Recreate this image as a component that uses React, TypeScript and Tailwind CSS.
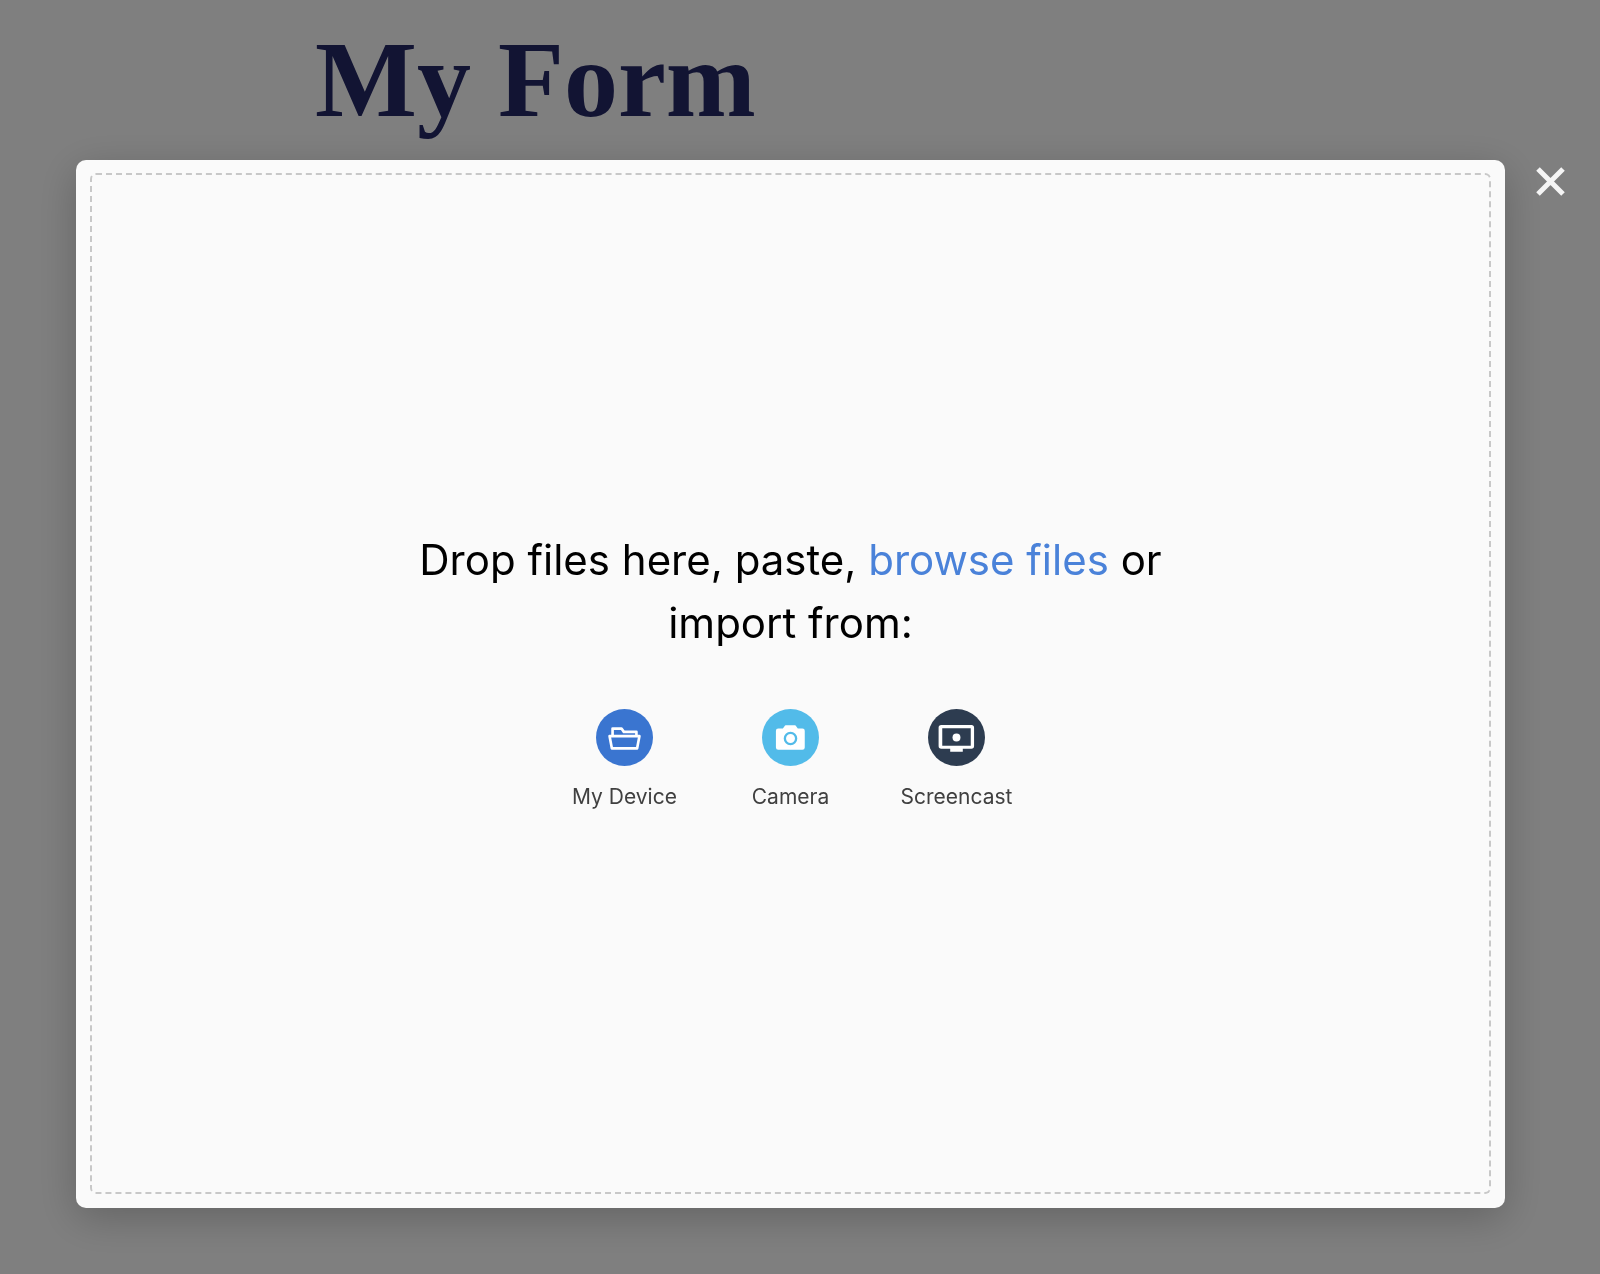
import type { ReactNode } from "react";

type Source = { label: string; icon: ReactNode };

const FolderIcon = () => (
  <svg viewBox="0 0 172 172" className="size-[57px]" aria-hidden="true">
    <circle cx="86" cy="86" r="86" fill="#3a75d0" />
    <g fill="none" stroke="#fff" strokeWidth="8" strokeLinejoin="round">
      <path d="M50 80V59h27l7 10h38v12" />
      <path d="M41 82h90l-7 37H48z" />
    </g>
  </svg>
);

const CameraIcon = () => (
  <svg viewBox="0 0 172 172" className="size-[57px]" aria-hidden="true">
    <circle cx="86" cy="86" r="86" fill="#52bbe9" />
    <path
      fill="#fff"
      d="M49 59h14l5-7q1-3 4-3h27q3 0 4 3l5 7h14q7 0 7 7v50q0 7-7 7H49q-7 0-7-7V66q0-7 7-7z"
    />
    <circle cx="86" cy="89" r="17" fill="none" stroke="#52bbe9" strokeWidth="7" />
  </svg>
);

const ScreencastIcon = () => (
  <svg viewBox="0 0 172 172" className="size-[57px]" aria-hidden="true">
    <circle cx="86" cy="86" r="86" fill="#2d3c50" />
    <path
      fill="#fff"
      fillRule="evenodd"
      d="M40 48h91q8 0 8 8v56q0 8-8 8h-26v9H67v-9H40q-8 0-8-8V56q0-8 8-8zm3 10v53h86V58z"
    />
    <circle cx="86" cy="86" r="12" fill="#fff" />
  </svg>
);

const sources: Source[] = [
  { label: "My Device", icon: <FolderIcon /> },
  { label: "Camera", icon: <CameraIcon /> },
  { label: "Screencast", icon: <ScreencastIcon /> },
];

export default function App() {
  return (
    <div className="min-h-screen bg-white">
      <main className="px-[315px] pt-5">
        <h1 className="font-['Liberation_Serif',serif] text-[108px] leading-[120px] font-bold whitespace-nowrap text-[#242866]">
          My Form
        </h1>
      </main>

      <div className="fixed inset-0 flex bg-black/50 pt-40 pr-[95px] pb-[66px] pl-[76px]">
        <section
          role="dialog"
          aria-modal="true"
          aria-label="File uploader"
          className="relative flex flex-1 rounded-[10px] bg-[#fafafa] px-[14px] pt-[13px] pb-[14px] font-['Inter',sans-serif] shadow-[0_10px_40px_rgba(0,0,0,0.22)]"
        >
          <button
            type="button"
            aria-label="Close"
            className="absolute top-0 left-full ml-6 flex size-[42px] items-center justify-center"
          >
            <svg viewBox="0 0 29 29" className="size-[29px]" aria-hidden="true">
              <path d="M2 2l25 25M27 2L2 27" stroke="#f5f5f5" strokeWidth="5" />
            </svg>
          </button>

          <div className="flex flex-1 flex-col items-center justify-center rounded-md border-2 border-dashed border-[#c8c8c8] pb-7">
            <p className="text-center text-[42px] leading-[63px] text-black">
              <span>Drop files here, paste, </span>
              <button type="button" className="text-[#4a82d9]">
                browse files
              </button>
              <span> or</span>
              <br />
              <span>import from:</span>
            </p>
            <div className="mt-[55px] flex">
              {sources.map(({ label, icon }) => (
                <button
                  key={label}
                  type="button"
                  className="flex w-[166px] flex-col items-center gap-4 text-[21px] leading-[30px] text-[#404040]"
                >
                  {icon}
                  <span>{label}</span>
                </button>
              ))}
            </div>
          </div>
        </section>
      </div>
    </div>
  );
}
